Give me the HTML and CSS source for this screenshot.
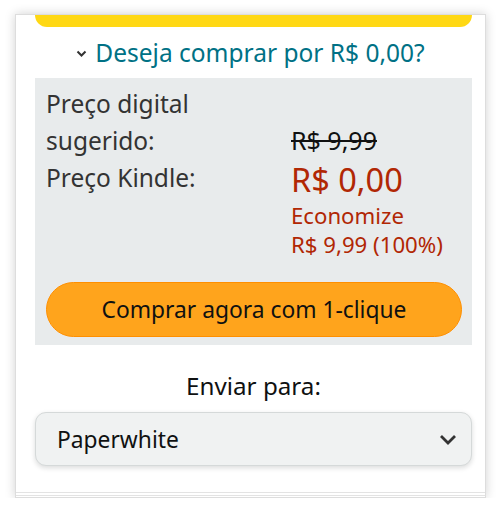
FILE: index.html
```html
<!DOCTYPE html>
<html>
<head>
    <meta charset="UTF-8">
    <link rel="stylesheet" href="styles.css">
</head>
<body>
    <div class="card">
        <div class="top-bar"></div>

        <div class="toggle">
            <svg class="caret" width="11" height="8" viewBox="0 0 11 8"><path d="M1.5 1.5 L5.5 5.5 L9.5 1.5" fill="none" stroke="#333" stroke-width="2"/></svg>
            <span>Deseja comprar por R$ 0,00?</span>
        </div>

        <!-- Bloco de preços -->
        <div class="price-box">
            <div class="prices">
                <div class="labels">
                    <div>Preço digital sugerido:</div>
                    <div>Preço Kindle:</div>
                </div>
                <div class="values">
                    <div class="list-price">R$ 9,99</div>
                    <div class="kindle-price">R$ 0,00</div>
                    <div class="savings">Economize<br>R$ 9,99 (100%)</div>
                </div>
            </div>
            <div class="buy-btn">Comprar agora com 1-clique</div>
        </div>

        <div class="send-label">Enviar para:</div>
        <div class="select">
            <span>Paperwhite</span>
            <svg width="18" height="11" viewBox="0 0 18 11"><path d="M2 2 L9 9 L16 2" fill="none" stroke="#333" stroke-width="2.8"/></svg>
        </div>
        <div class="bottom-line"></div>
    </div>
</body>
</html>
```

FILE: styles.css
```css
body {
    margin: 0;
    background: #ffffff;
    font-family: "Noto Sans", Arial, sans-serif;
    color: #0f1111;
}

.card {
    margin: 14px 14px 0 15px;
    height: 484px;
    background: white;
    border: 1px solid #dddddd;
    box-shadow: 0 0 10px rgba(0,0,0,0.18);
    padding: 0 13px 0 19px;
    box-sizing: border-box;
    display: flex;
    flex-direction: column;
}

.top-bar {
    height: 12px;
    background: #ffd814;
    border-radius: 0 0 12px 12px;
}

.toggle {
    display: flex;
    justify-content: center;
    align-items: center;
    gap: 8px;
    height: 51px;
    font-size: 24.5px;
    color: #007185;
    padding-right: 6px;
}

.caret {
    margin-top: 3px;
}

.price-box {
    background: #e8ebec;
    padding: 7px 10px 8px 11px;
}

.prices {
    display: flex;
    font-size: 24.5px;
    line-height: 37px;
}

.labels {
    width: 245px;
    color: #333333;
}

.labels div:first-child {
    width: 160px;
}

.values {
    padding-top: 37px;
}

.list-price {
    color: #111;
    font-size: 25px;
    text-decoration: line-through;
}

.kindle-price {
    color: #b12704;
    font-size: 32.5px;
    line-height: 42px;
}

.savings {
    color: #b12704;
    font-size: 22.2px;
    line-height: 29px;
}

.buy-btn {
    margin-top: 23px;
    height: 53px;
    background: #ffa41c;
    border: 1px solid #ff8f00;
    border-radius: 28px;
    display: flex;
    align-items: center;
    justify-content: center;
    font-size: 22.8px;
}

.send-label {
    text-align: center;
    font-size: 24.2px;
    line-height: 30px;
    margin-top: 26px;
}

.select {
    margin-top: 11px;
    height: 54px;
    box-sizing: border-box;
    background: #f0f2f2;
    border: 1px solid #d5d9d9;
    border-radius: 11px;
    box-shadow: 0 2px 5px rgba(15,17,17,0.15);
    display: flex;
    align-items: center;
    justify-content: space-between;
    padding: 0 14px 0 21px;
    font-size: 22.8px;
}

.bottom-line {
    margin: 26px -13px 0 -19px;
    border-top: 1px solid #e3e3e3;
    border-bottom: 1px solid #e3e3e3;
    height: 2px;
}
```
